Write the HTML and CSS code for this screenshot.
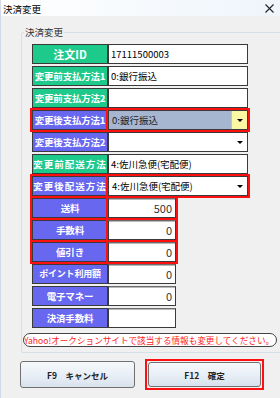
FILE: index.html
```
<!DOCTYPE html>
<html lang="ja">
<head>
    <meta charset="UTF-8">
    <meta name="viewport" content="width=device-width, initial-scale=1.0">
    <title>決済変更</title>
    <link rel="stylesheet" href="styles.css">
</head>
<body>
    <div class="window">
        <div class="titlebar">
            <span class="title">決済変更</span>
            <svg class="close" width="9" height="9" viewBox="0 0 9 9">
                <path d="M0.5 0.5 L8.5 8.5 M8.5 0.5 L0.5 8.5" stroke="#222" stroke-width="1.1" fill="none"/>
            </svg>
        </div>

        <fieldset class="group">
            <legend>決済変更</legend>

            <div class="rows">
                <div class="row">
                    <div class="label green big">注文ID</div>
                    <div class="field">17111500003</div>
                </div>
                <div class="row">
                    <div class="label green">変更前支払方法1</div>
                    <div class="field">0:銀行振込</div>
                </div>
                <div class="row">
                    <div class="label green">変更前支払方法2</div>
                    <div class="field"></div>
                </div>
                <div class="row">
                    <div class="label blue marked">変更後支払方法1</div>
                    <div class="field select active marked">
                        <span class="value">0:銀行振込</span>
                        <span class="drop"><i></i></span>
                    </div>
                </div>
                <div class="row">
                    <div class="label blue">変更後支払方法2</div>
                    <div class="field select">
                        <span class="value"></span>
                        <span class="drop"><i></i></span>
                    </div>
                </div>
                <div class="row">
                    <div class="label green wide">変更前配送方法</div>
                    <div class="field">4:佐川急便(宅配便)</div>
                </div>
                <div class="row">
                    <div class="label blue wide marked">変更後配送方法</div>
                    <div class="field select marked">
                        <span class="value">4:佐川急便(宅配便)</span>
                        <span class="drop"><i></i></span>
                    </div>
                </div>
                <div class="row">
                    <div class="label blue marked">送料</div>
                    <div class="field num marked">500</div>
                </div>
                <div class="row">
                    <div class="label blue marked">手数料</div>
                    <div class="field num marked">0</div>
                </div>
                <div class="row">
                    <div class="label blue marked">値引き</div>
                    <div class="field num marked">0</div>
                </div>
                <div class="row">
                    <div class="label blue small">ポイント利用額</div>
                    <div class="field num">0</div>
                </div>
                <div class="row">
                    <div class="label blue">電子マネー</div>
                    <div class="field num">0</div>
                </div>
                <div class="row">
                    <div class="label blue">決済手数料</div>
                    <div class="field num"></div>
                </div>
            </div>

            <div class="notice">Yahoo!オークションサイトで該当する情報も変更してください。</div>
        </fieldset>

        <div class="buttons">
            <button class="btn">F9　キャンセル</button>
            <div class="btn-frame">
                <button class="btn">F12　確定</button>
            </div>
        </div>
    </div>
</body>
</html>
```

FILE: styles.css
```
body {
    margin: 0;
    background: #f0f0f0;
    font-family: "Noto Sans CJK JP", sans-serif;
    color: #000;
}
.window {
    width: 280px;
    height: 398px;
    overflow: hidden;
    border-left: 1px solid #d3d9e8;
    box-sizing: border-box;
}
.titlebar {
    height: 16px;
    display: flex;
    align-items: center;
    justify-content: space-between;
    padding: 1px 6px 0 2px;
    box-sizing: border-box;
    background: linear-gradient(to right, #ffffff, #eef5fb);
}
.title {
    font-size: 9.5px;
    line-height: 12px;
}
.close {
    display: block;
}
.group {
    margin: 10px 0 0 20px;
    width: 242px;
    box-sizing: border-box;
    padding: 6px 4px 5px 10px;
    border: 1px solid #d5dfe6;
    border-radius: 2px;
}
.group legend {
    margin-left: -8px;
    padding: 0 1px;
    font-size: 9.5px;
    line-height: 12px;
    color: #333;
}
.rows {
    display: flex;
    flex-direction: column;
    gap: 2px;
}
.row {
    display: flex;
    height: 20px;
}
.label {
    width: 76px;
    box-sizing: border-box;
    border: 1px solid #3a3a3a;
    color: #fff;
    font-weight: bold;
    font-size: 9.5px;
    line-height: 18px;
    text-align: center;
    white-space: nowrap;
    overflow: hidden;
    letter-spacing: -0.2px;
}
.label.green {
    background: #1ec98c;
}
.label.blue {
    background: #6767f0;
}
.label.big {
    font-size: 11px;
    letter-spacing: 0;
}
.label.wide {
    letter-spacing: 1px;
}
.label.small {
    font-size: 9px;
}
.marked {
    outline: 2px solid #ff1010;
    outline-offset: 0;
}
.field {
    width: 140px;
    box-sizing: border-box;
    background: #fff;
    border: 1px solid #3a3a3a;
    font-size: 9.5px;
    line-height: 18px;
    padding-left: 2px;
    white-space: nowrap;
    overflow: hidden;
    display: flex;
}
.field.num {
    width: 68px;
    justify-content: flex-end;
    padding: 0 3px 0 0;
    font-size: 11px;
    color: #333;
    border-top-color: #6d6d6d;
    box-shadow: inset 0 1px 0 #b8b8b8;
}
.field.select {
    padding: 0;
}
.select .value {
    flex: 1;
    padding-left: 3px;
}
.select .drop {
    width: 15px;
    display: flex;
    align-items: center;
    justify-content: center;
}
.select .drop i {
    width: 0;
    height: 0;
    border-left: 3px solid transparent;
    border-right: 3px solid transparent;
    border-top: 3px solid #000;
}
.select.active .value {
    background: #a6b5d0;
    color: #222;
}
.select.active .drop {
    background: #fbf7a2;
    border-left: 1px solid #c8c6a0;
}
.notice {
    margin: 5px 0 0 -9px;
    height: 14px;
    box-sizing: border-box;
    border: 1px solid #444;
    border-radius: 7px;
    background: #fff;
    color: #ff1a1a;
    font-size: 8.6px;
    line-height: 12px;
    white-space: nowrap;
    overflow: hidden;
    display: flex;
    justify-content: flex-end;
    padding-right: 2px;
}
.buttons {
    display: flex;
    gap: 10px;
    margin: 6px 0 0 19px;
    align-items: center;
}
.btn {
    width: 115px;
    height: 27px;
    border: 1px solid #707070;
    border-radius: 3px;
    background: linear-gradient(to bottom, #f6f9fc 0%, #e9eff6 50%, #d8e2ed 100%);
    font-family: "Noto Sans CJK JP", sans-serif;
    font-size: 8.5px;
    font-weight: bold;
    color: #222;
    padding: 0;
}
.btn-frame {
    border: 2px solid #ff1010;
    padding: 1px;
    display: flex;
}
.btn-frame .btn {
    width: 113px;
    height: 25px;
}
```
